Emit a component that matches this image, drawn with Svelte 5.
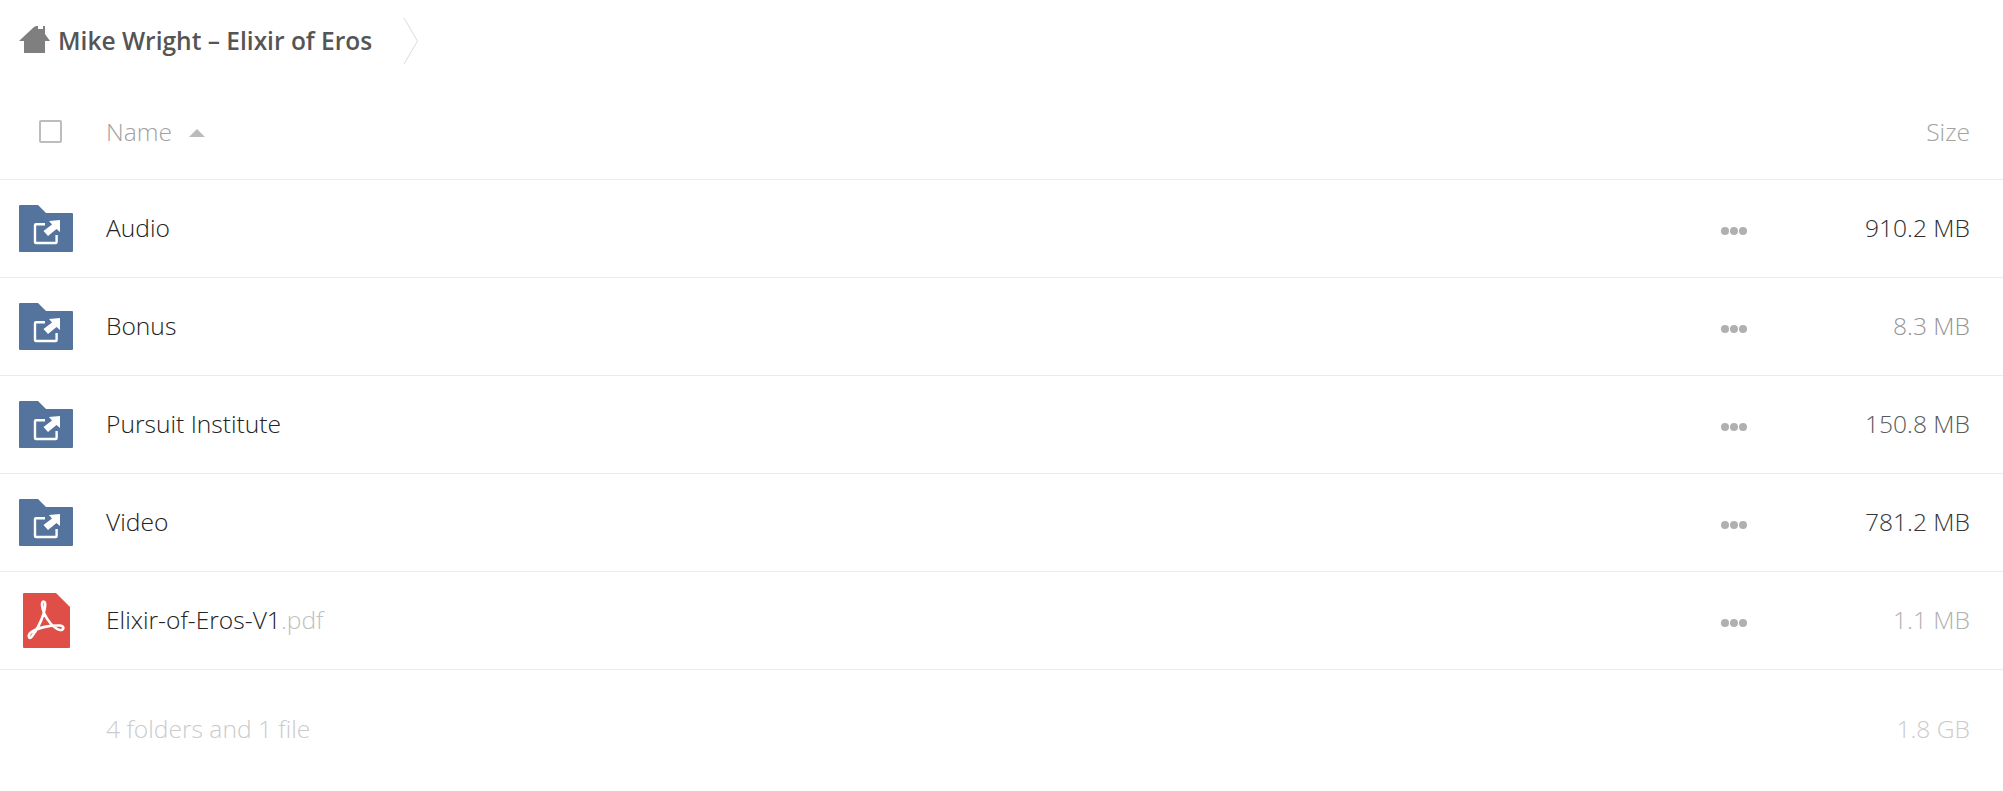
<script>
  const rows = [
    { name: 'Audio', size: '910.2 MB', tone: '#2e2e2e' },
    { name: 'Bonus', size: '8.3 MB', tone: '#969696' },
    { name: 'Pursuit Institute', size: '150.8 MB', tone: '#5a5a5a' },
    { name: 'Video', size: '781.2 MB', tone: '#363636' },
    { name: 'Elixir-of-Eros-V1', ext: '.pdf', size: '1.1 MB', tone: '#b0b0b0', pdf: true }
  ];
</script>

<div class="files">
  <nav class="crumbs">
    <svg class="home" viewBox="0 0 31 28" width="31" height="28">
      <path fill="#7f7f7f" d="M0 15 15 1 17 0H19V3H24V0H26V8L31 15H26V27H5V15Z" />
    </svg>
    <span class="crumb">Mike Wright – Elixir of Eros</span>
    <svg class="chevron" viewBox="0 0 16 48" width="16" height="48">
      <path d="M1 1 14.5 24 1 47" fill="none" stroke="#dcdcdc" stroke-width="1" />
    </svg>
  </nav>

  <div class="row head">
    <div class="icon-col"><span class="check"></span></div>
    <div class="name">Name<span class="sort"></span></div>
    <div class="size">Size</div>
  </div>

  {#each rows as row}
    <div class="row item">
      <div class="icon-col">
        {#if row.pdf}
          <svg class="pdf" viewBox="0 0 47 55" width="47" height="55">
            <path fill="#e04f47" d="M1 0H33L47 14V54Q47 55 46 55H1Q0 55 0 54V1Q0 0 1 0Z" />
            <path fill="none" stroke="#fff" stroke-width="2.6" d="M20.5 8.5C23 8.5 22.5 14 20.5 21 18 29 13 38 8.5 44 6 47 4 42 8.5 39 15 34.5 28 32 37 32.5 42 33 41 37.5 37 37 31 36 24 27 21 20 19 15 18 8.5 20.5 8.5Z" />
          </svg>
        {:else}
          <svg viewBox="0 0 54 47" width="54" height="47">
            <path fill="#54739d" d="M1 0H19L27 8H53Q54 8 54 9V46Q54 47 53 47H1Q0 47 0 46V1Q0 0 1 0Z" />
            <path fill="none" stroke="#fff" stroke-width="2.4" d="M26 19.2H17Q16 19.2 16 20.2V37Q16 38 17 38H36.6Q37.6 38 37.6 37V30" />
            <path fill="#fff" d="M30 16 41 15V27L37.5 24 29 31 24.5 26 33 19.5Z" />
          </svg>
        {/if}
      </div>
      <div class="name">{row.name}{#if row.ext}<span class="ext">{row.ext}</span>{/if}</div>
      <div class="dots"><i></i><i></i><i></i></div>
      <div class="size" style="color: {row.tone}">{row.size}</div>
    </div>
  {/each}

  <div class="row summary">
    <div class="icon-col"></div>
    <div class="name">4 folders and 1 file</div>
    <div class="size">1.8 GB</div>
  </div>
</div>

<style>
  :global(body) {
    background: #fff;
    font-family: 'Open Sans', sans-serif;
    font-weight: 300;
    font-size: 24.6px;
    color: #222;
  }

  .crumbs {
    height: 88px;
    display: flex;
    align-items: center;
    padding: 0 0 8px 19px;
    box-sizing: border-box;
  }

  .home {
    margin-right: 8px;
  }

  .crumb {
    font-size: 24.5px;
    font-weight: 600;
    color: #555;
  }

  .chevron {
    margin-left: 31px;
    margin-top: 2px;
  }

  .row {
    display: flex;
    align-items: center;
    border-bottom: 1px solid #ebebeb;
    box-sizing: border-box;
  }

  .head {
    height: 92px;
    color: #a2a2a2;
    padding-bottom: 4px;
  }

  .item {
    height: 98px;
  }

  .item .name,
  .item .size {
    padding-bottom: 3px;
  }

  .summary {
    height: 116px;
    border-bottom: none;
    color: #cbcbcb;
  }

  .icon-col {
    width: 106px;
    flex-shrink: 0;
    display: flex;
    justify-content: flex-start;
    padding-left: 19px;
    box-sizing: border-box;
  }

  .icon-col svg {
    display: block;
  }

  .icon-col .pdf {
    margin-left: 4px;
  }

  .check {
    width: 23px;
    height: 23px;
    margin-left: 20px;
    border: 2px solid #bdbdbd;
    border-radius: 2px;
    box-sizing: border-box;
  }

  .name {
    flex: 1;
  }

  .ext {
    color: #c0c0c0;
  }

  .sort {
    display: inline-block;
    margin-left: 17px;
    vertical-align: 4px;
    border: 8px solid transparent;
    border-top: 0;
    border-bottom: 8px solid #bbb;
  }

  .dots {
    display: flex;
    gap: 1px;
    margin-right: 106px;
    padding-top: 4px;
  }

  .dots i {
    width: 8px;
    height: 8px;
    border-radius: 50%;
    background: #b0b0b0;
  }

  .size {
    width: 150px;
    padding-right: 33px;
    box-sizing: border-box;
    text-align: right;
    flex-shrink: 0;
  }
</style>
